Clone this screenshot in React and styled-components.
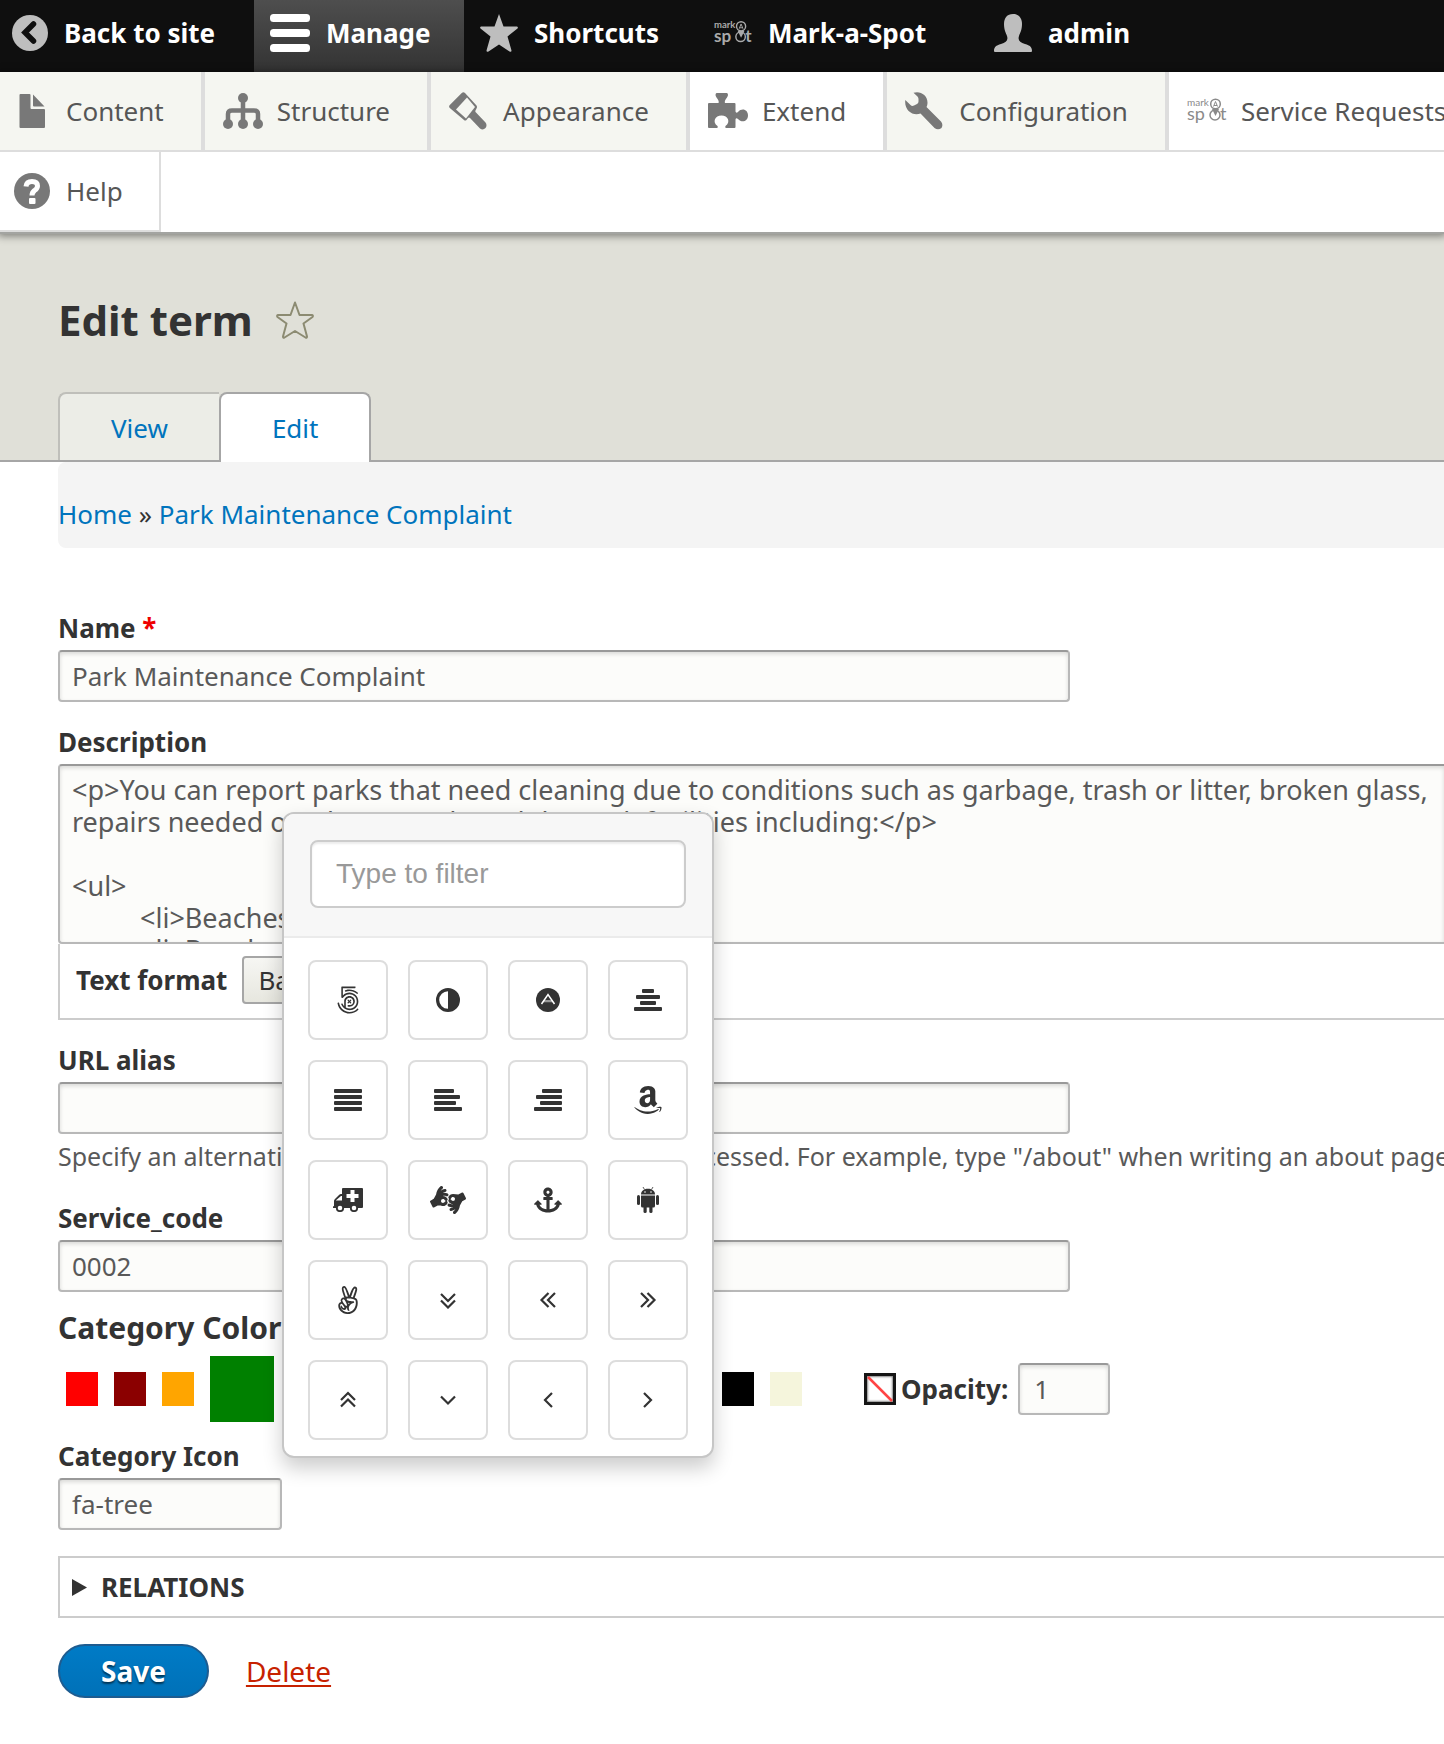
import React, { useState } from "react";
import styled, { createGlobalStyle, css } from "styled-components";
import {
  Fa500Px,
  FaAmazon,
  FaAmericanSignLanguageInterpreting,
  FaAnchor,
  FaAngellist,
} from "react-icons/fa";

const GlobalStyle = createGlobalStyle`
  *, *::before, *::after { box-sizing: border-box; }
  html { overflow-x: hidden; background: #fff; }
  body {
    margin: 0;
    overflow-x: hidden;
    min-height: 100vh;
    background: #fff;
    color: #333;
    font: 26px/32px "Noto Sans", "Open Sans", sans-serif;
  }
  button, input, textarea, select { font: inherit; color: inherit; margin: 0; }
  svg { display: block; flex: none; }
`;

/* ---------- Toolbar ---------- */

const Bar = styled.nav`
  display: flex;
  height: 72px;
  background: #0f0f0f;
  color: #fff;
  font-weight: 700;
`;

const BarItem = styled.a`
  display: flex;
  align-items: center;
  gap: 16px;
  min-width: ${(p) => p.$width}px;
  padding: 0 16px 6px ${(p) => p.$start || 16}px;
  color: #fff;
  white-space: nowrap;
  text-decoration: none;
  ${(p) => p.$active && css`background: linear-gradient(#4e4e4e, #333);`}
`;

const Tray = styled.nav`
  position: relative;
  z-index: 1;
  background: #fff;
  color: #565656;
  box-shadow: 0 2px 0 #a3a4a1, 0 2px 8px 2px rgba(0, 0, 0, 0.45);
`;

const TrayRow = styled.div`
  display: flex;
  height: 80px;
  overflow: hidden;
  border-bottom: ${(p) => (p.$ruled ? "2px solid #ddd" : "0")};
`;

const TrayItem = styled.a`
  display: flex;
  flex: none;
  align-items: center;
  gap: ${(p) => p.$gap || 14}px;
  padding: 0 ${(p) => (p.$thin ? 36 : 37)}px 0 ${(p) => p.$start || 18}px;
  border-right: ${(p) => (p.$thin ? 2 : 4)}px solid #ddd;
  border-bottom: ${(p) => (p.$thin ? "2px solid #ddd" : "0")};
  background: ${(p) => (p.$plain ? "#fff" : "#f5f6f1")};
  color: #565656;
  white-space: nowrap;
  text-decoration: none;
`;

/* ---------- Page header ---------- */

const PageHeader = styled.header`
  padding: 62px 0 0 58px;
  background: #e0e0d8;
  border-bottom: 2px solid #a6a6a6;
`;

const TitleRow = styled.div`
  display: flex;
  align-items: center;
  gap: 23px;
  margin-bottom: 46px;
`;

const Title = styled.h1`
  margin: 0;
  font-size: 42px;
  line-height: 52px;
`;

const StarButton = styled.button`
  padding: 0;
  border: 0;
  background: none;
`;

const Tabs = styled.nav`
  display: flex;
`;

const Tab = styled.a`
  padding: 0 51px;
  border: 2px solid ${(p) => (p.$active ? "#a6a6a6" : "#bfbfba")};
  border-bottom: 0;
  border-right-width: ${(p) => (p.$active ? 2 : 0)}px;
  border-radius: ${(p) => (p.$active ? "8px 8px 0 0" : "8px 0 0 0")};
  margin-bottom: ${(p) => (p.$active ? -2 : 0)}px;
  background: ${(p) => (p.$active ? "#fff" : "#ecede7")};
  color: #0074bd;
  line-height: 68px;
  text-decoration: none;
  height: ${(p) => (p.$active ? 70 : 68)}px;
`;

/* ---------- Form ---------- */

const Main = styled.main`
  padding: 0 0 46px 58px;
`;

const Breadcrumb = styled.nav`
  padding: 36px 0 18px;
  border-radius: 8px 0 0 8px;
  background: #f4f4f4;
  a { color: #0074bd; text-decoration: none; }
`;

const Form = styled.form`
  padding-top: 64px;
`;

const Field = styled.div`
  margin-bottom: ${(p) => p.$after || 24}px;
`;

const Label = styled.label`
  display: block;
  margin-bottom: 6px;
  font-weight: 700;
`;

const Required = styled.span`
  color: #e00;
`;

const box = css`
  border: 2px solid #b8b8b8;
  border-top-color: #999;
  border-radius: 4px;
  background: #fcfcfa;
  color: #595959;
  box-shadow: inset 0 2px 4px rgba(0, 0, 0, 0.14);
  outline: 0;
`;

const TextInput = styled.input`
  ${box}
  display: block;
  width: ${(p) => p.$width};
  max-width: 100%;
  height: 52px;
  padding: 0 ${(p) => p.$pad || 12}px;
`;

const TextArea = styled.textarea`
  ${box}
  display: block;
  width: 100%;
  height: 180px;
  padding: 8px 0 0 12px;
  border-right: 0;
  border-radius: 4px 0 0 4px;
  overflow: hidden;
  resize: none;
  font-size: 27px;
  tab-size: 68px;
  white-space: pre;
`;

const FormatRow = styled.div`
  display: flex;
  align-items: center;
  gap: 15px;
  padding: 12px 16px 14px;
  border: 2px solid #ccc;
  border-width: 0 0 2px 2px;
  label { margin: 0; }
`;

const Select = styled.select`
  height: 48px;
  padding: 0 60px 0 14px;
  appearance: none;
  border: 2px solid #a6a6a6;
  border-radius: 4px;
  background: linear-gradient(#f6f6f3, #e7e7df);
  color: #333;
`;

const Help = styled.p`
  margin: 6px 0 30px;
  overflow: hidden;
  color: #595959;
  font-size: 25px;
  white-space: nowrap;
`;

const SubHeading = styled.h4`
  margin: 0 0 10px;
  font-size: 30px;
  line-height: 36px;
`;

const ColorRow = styled.div`
  display: flex;
  align-items: center;
  height: 66px;
  padding-left: 8px;
`;

const Swatches = styled.div`
  display: flex;
  align-items: center;
  gap: 16px;
  margin-right: 62px;
`;

const Swatch = styled.button`
  width: ${(p) => (p.$selected ? 64 : 32)}px;
  height: ${(p) => (p.$selected ? 66 : 34)}px;
  padding: 0;
  border: 0;
  background: ${(p) => p.$color};
`;

const ClearSwatch = styled.button`
  width: 32px;
  height: 32px;
  padding: 0;
  border: 3px solid #151515;
  background: #fff;
  box-shadow: inset 0 0 2px 1px #888;
`;

const OpacityLabel = styled.label`
  margin: 0 10px 0 5px;
  font-weight: 700;
`;

const IconField = styled.div`
  position: relative;
  width: 224px;
`;

const Relations = styled.details`
  margin-bottom: 26px;
  border: 2px solid #ccc;
  border-right: 0;
`;

const Summary = styled.summary`
  display: flex;
  align-items: center;
  gap: 14px;
  padding: 13px 12px;
  font-weight: 700;
  text-transform: uppercase;
  list-style: none;
`;

const Actions = styled.div`
  display: flex;
  align-items: center;
  gap: 37px;
`;

const SaveButton = styled.button`
  height: 54px;
  padding: 0 41px;
  border: 2px solid #1e5c90;
  border-radius: 27px;
  background: linear-gradient(#007bc6, #0071b8);
  color: #fff;
  font-size: 28px;
  font-weight: 700;
  line-height: 48px;
  text-shadow: 0 2px 2px rgba(0, 0, 0, 0.55);
`;

const DeleteLink = styled.a`
  color: #c72100;
  font-size: 28px;
  text-decoration-thickness: 2px;
  text-underline-offset: 3px;
`;

/* ---------- Icon picker ---------- */

const Popover = styled.div`
  position: absolute;
  left: 100%;
  bottom: calc(100% + 20px);
  width: 432px;
  border: 2px solid #c6c6c6;
  border-radius: 12px;
  background: #fff;
  box-shadow: 0 10px 20px rgba(0, 0, 0, 0.2);
  overflow: hidden;
`;

const Filter = styled.div`
  padding: 26px 26px 28px;
  border-bottom: 2px solid #ebebeb;
  background: #f7f7f7;
`;

const FilterInput = styled.input`
  display: block;
  width: 100%;
  height: 68px;
  padding: 0 24px;
  border: 2px solid #ccc;
  border-radius: 8px;
  background: #fff;
  box-shadow: inset 0 2px 2px rgba(0, 0, 0, 0.08);
  font: 28px/40px "Liberation Sans", Arial, sans-serif;
  &::placeholder { color: #999; opacity: 1; }
`;

const IconGrid = styled.div`
  display: grid;
  grid-template-columns: repeat(4, 80px);
  gap: 20px;
  padding: 22px 24px 16px;
`;

const IconButton = styled.button`
  display: flex;
  align-items: center;
  justify-content: center;
  height: 80px;
  padding: 0;
  border: 2px solid #ddd;
  border-radius: 8px;
  background: #fff;
  color: #333;
`;

/* ---------- Drawings ---------- */

const BackIcon = () => (
  <svg width="36" height="36" viewBox="0 0 36 36">
    <circle cx="18" cy="18" r="18" fill="#bebebe" />
    <path d="M21.500 9L13 17.500L21.500 26" fill="none" stroke="#0f0f0f" strokeWidth="5.500" strokeLinecap="round" strokeLinejoin="miter" />
  </svg>
);

const MenuIcon = () => (
  <svg width="40" height="38" viewBox="0 0 40 38" fill="#fff">
    <rect width="40" height="8" rx="3.500" />
    <rect y="15" width="40" height="8" rx="3.500" />
    <rect y="30" width="40" height="8" rx="3.500" />
  </svg>
);

const StarIcon = () => (
  <svg width="38" height="38" viewBox="0 0 38 38" fill="#bebebe">
    <path d="M19 0L23.500 12.500H37Q38.500 13 37.500 14.500L27.500 22.500L31.500 36.500Q31.500 38.500 29.500 37.500L19 30.500L8.500 37.500Q6.500 38.500 6.500 36.500L10.500 22.500L.5 14.500Q-.5 13 1 12.500H14.500Z" />
  </svg>
);

const UserIcon = () => (
  <svg width="38" height="38" viewBox="0 0 38 38" fill="#bebebe">
    <path d="M19 0C13 0 10 4 10 10C10 16 12 19 13 22C14.500 26 12 28.500 7 30C2 31.500 0 33 0 37Q0 38 1 38H37Q38 38 38 37C38 33 36 31.500 31 30C26 28.500 23.500 26 25 22C26 19 28 16 28 10C28 4 25 0 19 0Z" />
  </svg>
);

const SpotLogo = ({ color, size = 40 }) => (
  <svg width={size} height="28" viewBox="0 0 40 28" fill={color} overflow="visible" aria-hidden="true">
    <text x="0" y="9" fontFamily="Lato, sans-serif" fontSize="10">mark</text>
    <text x="0" y="23" fontFamily="Lato, sans-serif" fontSize="18">sp</text>
    <text x="33" y="23" fontFamily="Lato, sans-serif" fontSize="18">t</text>
    <circle cx="28" cy="18" r="5" fill="none" stroke={color} strokeWidth="1.500" />
    <circle cx="28.500" cy="7" r="4.800" fill="none" stroke={color} strokeWidth="1.500" />
    <path d="M26.500 9.500L28.500 4.500L30.500 9.500M27 8.500H30" fill="none" stroke={color} />
    <path d="M25 12H32L28.500 19Z" />
  </svg>
);

const FileIcon = () => (
  <svg width="40" height="34" viewBox="0 0 40 34" fill="#787878">
    <path d="M8.500 0H17.500Q18.500 0 18.500 1V14Q18.500 15 19.500 15H32Q33 15 33 16V33Q33 34 32 34H8.500Q7.500 34 7.500 33V1Q7.500 0 8.500 0ZM21 .5L32.500 12.500H22Q21 12.500 21 11.500Z" />
  </svg>
);

const StructureIcon = () => (
  <svg width="40" height="36" viewBox="0 0 40 36" fill="#787878">
    <circle cx="20" cy="5" r="5" />
    <circle cx="5" cy="31" r="5" />
    <circle cx="20" cy="31" r="5" />
    <circle cx="35" cy="31" r="5" />
    <path d="M20 5V30M5 30V21Q5 17.500 9 17.500H31Q35 17.500 35 21V30" fill="none" stroke="#787878" strokeWidth="4.500" />
  </svg>
);

const BrushIcon = () => (
  <svg width="40" height="38" viewBox="0 0 40 38" fill="#787878">
    <path d="M13 .8Q14.500 -.6 16 1L27.500 13.500Q28.500 15 27.500 16.500L26.500 18.500Q26 19.500 27 20.500L36.500 30.500Q38.500 33 36.500 36Q34 38.500 31 36.500L21 26Q20 25 19 26L17.500 28Q16 29 15 28L.8 16Q-.6 14.500 .8 13Z" />
    <path d="M18 5.500L26 15L17 26.500L7 17.500Z" fill="#f5f6f1" />
  </svg>
);

const PuzzleIcon = () => (
  <svg width="40" height="36" viewBox="0 0 40 36" fill="#787878">
    <path d="M0 11Q0 10 1 10H10.500Q11.500 8 8.500 4.500Q6.500 1.500 8.500 0H19Q21 1.500 19 4.500Q16 8 17 10H26.500Q27.500 10 27.500 11V18.500Q28 20.500 30 19C34 14.500 40 16.500 40 22.500C40 28 34 30.500 30 26Q28 24.500 27.500 26.500V34Q27.500 35 26.500 35H18Q16.500 34.500 17.500 33C23 29 20 22.500 13.500 22.500C7 22.500 4 29 9.500 33Q10.500 34.500 9 35H1Q0 35 0 34Z" />
  </svg>
);

const WrenchIcon = () => (
  <svg width="40" height="38" viewBox="0 0 40 38" fill="#787878">
    <path d="M8.500 .8C15 -1.500 22.500 3 22.500 10.500C22.500 12.500 22 14 21.500 15L36 29.500Q38.500 32.500 36.500 36Q33 38.500 29.500 36L15.500 21.500C8 24.500 -1 18.500 .3 8L5.500 13Q7 14.500 9 13.500L12 12Q13.500 11 13.500 9.500L13.500 7Q13.500 5.500 12.500 4.500Z" />
  </svg>
);

const HelpIcon = () => (
  <svg width="36" height="36" viewBox="0 0 36 36">
    <circle cx="18" cy="18" r="18" fill="#787878" />
    <path d="M12 13.500Q12.500 8.500 18 8.500Q23.500 8.500 23.500 13Q23.500 15.500 20.500 17.500Q18 19.500 18 22.500" fill="none" stroke="#fff" strokeWidth="5" />
    <rect x="15" y="25" width="6.500" height="6" rx="1" fill="#fff" />
  </svg>
);

const OutlineStar = () => (
  <svg width="38" height="38" viewBox="0 0 38 38" fill="none" stroke="#8c8b72" strokeWidth="2" strokeLinejoin="round">
    <path d="M19 1.500L23.500 14H36Q37.500 14.500 36.500 16L27.500 22.500L31 35.500Q31 37.500 29.500 36.500L19 30L8.500 36.500Q7 37.500 7 35.500L10.500 22.500L1.500 16Q.5 14.500 2 14H14.500Z" />
  </svg>
);

const AdjustIcon = () => (
  <svg width="24" height="24" viewBox="0 0 24 24">
    <circle cx="12" cy="12" r="10.400" fill="none" stroke="currentColor" strokeWidth="3.200" />
    <path d="M12 2A10 10 0 0 1 12 22Z" fill="currentColor" />
  </svg>
);

const AdnIcon = () => (
  <svg width="24" height="24" viewBox="0 0 24 24">
    <circle cx="12" cy="12" r="12" fill="currentColor" />
    <path d="M8 12H16L17.500 14.300H6.500Z" fill="#999" />
    <path d="M5.500 16L12 6.500L18.500 16" fill="none" stroke="#fff" strokeWidth="1.500" />
  </svg>
);

const ALIGN = { center: [12, 24, 16, 28], justify: [28, 28, 28, 28], left: [20, 26, 22, 28], right: [20, 26, 22, 28] };

const AlignIcon = ({ mode }) => (
  <svg width="28" height="22" viewBox="0 0 28 22" fill="currentColor">
    {ALIGN[mode].map((w, i) => (
      <rect key={i} x={mode === "center" ? (28 - w) / 2 : mode === "right" ? 28 - w : 0} y={i * 6} width={w} height="4" rx="1" />
    ))}
  </svg>
);

const AmbulanceIcon = () => (
  <svg width="30" height="24" viewBox="0 0 30 24" fill="currentColor">
    <path fillRule="evenodd" d="M10 0H29Q30 0 30 1V19Q30 20 29 20H0V18.500L1 18V13Q1 12 2 11L6 7Q7 6 8 6H9V1Q9 0 10 0ZM3 12.500H9V8H8L3 12.200ZM17.500 2V6H13.500V10H17.500V14H21.500V10H25.500V6H21.500V2Z" />
    <circle cx="7" cy="20" r="3.200" fill="#fff" stroke="currentColor" strokeWidth="1.800" />
    <circle cx="21" cy="20" r="3.200" fill="#fff" stroke="currentColor" strokeWidth="1.800" />
  </svg>
);

const AndroidIcon = () => (
  <svg width="22" height="26" viewBox="0 0 22 26" fill="currentColor">
    <path d="M4 7.500C4 4.500 6.500 1.800 11 1.800S18 4.500 18 7.500Z" />
    <path d="M6 0L7.500 2.500M16 0L14.500 2.500" stroke="currentColor" strokeWidth=".8" />
    <circle cx="8" cy="5" r=".8" fill="#fff" />
    <circle cx="14" cy="5" r=".8" fill="#fff" />
    <path d="M4 8.500H18V19Q18 20.500 16.500 20.500H5.500Q4 20.500 4 19Z" />
    <rect x="0" y="8" width="3" height="10" rx="1.500" />
    <rect x="19" y="8" width="3" height="10" rx="1.500" />
    <rect x="6.500" y="18" width="3.200" height="8" rx="1.500" />
    <rect x="12.300" y="18" width="3.200" height="8" rx="1.500" />
  </svg>
);

const ANGLES = {
  "double-down": "M2 3L9 10L16 3M2 9.500L9 16.500L16 9.500",
  "double-left": "M9.500 2L2.500 9L9.500 16M16 2L9 9L16 16",
  "double-right": "M2 2L9 9L2 16M8.500 2L15.500 9L8.500 16",
  "double-up": "M2 9L9 2L16 9M2 15.500L9 8.500L16 15.500",
  down: "M2 5.500L9 12.500L16 5.500",
  left: "M13 2L6 9L13 16",
  right: "M5 2L12 9L5 16",
};

const AngleIcon = ({ mode }) => (
  <svg width="18" height="18" viewBox="0 0 18 18" fill="none" stroke="currentColor" strokeWidth="2.200">
    <path d={ANGLES[mode]} />
  </svg>
);

/* ---------- Data ---------- */

const ICONS = [
  ["500px", <Fa500Px size={28} />],
  ["adjust", <AdjustIcon />],
  ["adn", <AdnIcon />],
  ["align-center", <AlignIcon mode="center" />],
  ["align-justify", <AlignIcon mode="justify" />],
  ["align-left", <AlignIcon mode="left" />],
  ["align-right", <AlignIcon mode="right" />],
  ["amazon", <FaAmazon size={32} />],
  ["ambulance", <AmbulanceIcon />],
  ["sign-language", <FaAmericanSignLanguageInterpreting size={36} />],
  ["anchor", <FaAnchor size={28} />],
  ["android", <AndroidIcon />],
  ["angellist", <FaAngellist size={28} />],
  ["angle-double-down", <AngleIcon mode="double-down" />],
  ["angle-double-left", <AngleIcon mode="double-left" />],
  ["angle-double-right", <AngleIcon mode="double-right" />],
  ["angle-double-up", <AngleIcon mode="double-up" />],
  ["angle-down", <AngleIcon mode="down" />],
  ["angle-left", <AngleIcon mode="left" />],
  ["angle-right", <AngleIcon mode="right" />],
];

const COLORS = [
  "red", "darkred", "orange", "green", "darkgreen", "blue", "darkblue", "cadetblue",
  "purple", "indigo", "pink", "gray", "lightgray", "black", "beige",
];

const DESCRIPTION = [
  "<p>You can report parks that need cleaning due to conditions such as garbage, trash or litter, broken glass,",
  "repairs needed on playgrounds and the park facilities including:</p>",
  "",
  "<ul>",
  "\t<li>Beaches</li>",
  "\t<li>Benches</li>",
  "</ul>",
].join("\n");

export default function App() {
  const [color, setColor] = useState("green");
  const [icon, setIcon] = useState("fa-tree");

  return (
    <>
      <GlobalStyle />
      <Bar aria-label="Toolbar">
        <BarItem href="#site" $start={12} $width={254}><BackIcon />Back to site</BarItem>
        <BarItem href="#manage" $width={210} $active><MenuIcon />Manage</BarItem>
        <BarItem href="#shortcuts" $width={234}><StarIcon />Shortcuts</BarItem>
        <BarItem href="#spot" $width={280}><SpotLogo color="#aaa" size={38} />Mark-a-Spot</BarItem>
        <BarItem href="#user"><UserIcon />admin</BarItem>
      </Bar>
      <Tray aria-label="Administration">
        <TrayRow $ruled>
          <TrayItem href="#content" $start={12}><FileIcon />Content</TrayItem>
          <TrayItem href="#structure"><StructureIcon />Structure</TrayItem>
          <TrayItem href="#appearance"><BrushIcon />Appearance</TrayItem>
          <TrayItem href="#extend" $plain><PuzzleIcon />Extend</TrayItem>
          <TrayItem href="#config"><WrenchIcon />Configuration</TrayItem>
          <TrayItem href="#requests" $plain><SpotLogo color="#8a8a8a" />Service Requests</TrayItem>
        </TrayRow>
        <TrayRow>
          <TrayItem href="#help" $plain $thin $start={14} $gap={16}><HelpIcon />Help</TrayItem>
        </TrayRow>
      </Tray>

      <PageHeader>
        <TitleRow>
          <Title>Edit term</Title>
          <StarButton type="button" aria-label="Add to shortcuts"><OutlineStar /></StarButton>
        </TitleRow>
        <Tabs aria-label="Tabs">
          <Tab href="#view">View</Tab>
          <Tab href="#edit" $active>Edit</Tab>
        </Tabs>
      </PageHeader>

      <Main>
        <Breadcrumb aria-label="Breadcrumb">
          <a href="#home">Home</a> » <a href="#term">Park Maintenance Complaint</a>
        </Breadcrumb>

        <Form onSubmit={(e) => e.preventDefault()}>
          <Field>
            <Label htmlFor="name">Name <Required>*</Required></Label>
            <TextInput id="name" $width="1012px" defaultValue="Park Maintenance Complaint" />
          </Field>

          <Field>
            <Label htmlFor="description">Description</Label>
            <TextArea id="description" wrap="off" defaultValue={DESCRIPTION} />
            <FormatRow>
              <Label htmlFor="format">Text format</Label>
              <Select id="format"><option>Basic HTML</option></Select>
            </FormatRow>
          </Field>

          <Field $after={30}>
            <Label htmlFor="alias">URL alias</Label>
            <TextInput id="alias" $width="1012px" />
            <Help>
              Specify an alternative path by which this data can be accessed. For example, type "/about" when writing an about page.
            </Help>
          </Field>

          <Field $after={18}>
            <Label htmlFor="code">Service_code</Label>
            <TextInput id="code" $width="1012px" defaultValue="0002" />
          </Field>

          <Field $after={18}>
            <SubHeading>Category Color</SubHeading>
            <ColorRow>
              <Swatches>
                {COLORS.map((c) => (
                  <Swatch key={c} type="button" aria-label={c} $color={c} $selected={c === color} onClick={() => setColor(c)} />
                ))}
              </Swatches>
              <ClearSwatch type="button" aria-label="No color">
                <svg width="26" height="26" viewBox="0 0 26 26"><path d="M1 1L25 25" stroke="#f44" strokeWidth="2.500" /></svg>
              </ClearSwatch>
              <OpacityLabel htmlFor="opacity">Opacity:</OpacityLabel>
              <TextInput id="opacity" $width="92px" $pad={14} defaultValue="1" />
            </ColorRow>
          </Field>

          <Field $after={26}>
            <Label htmlFor="icon">Category Icon</Label>
            <IconField>
              <TextInput id="icon" $width="224px" value={icon} onChange={(e) => setIcon(e.target.value)} />
              <Popover role="dialog" aria-label="Icons">
                <Filter>
                  <FilterInput type="search" placeholder="Type to filter" aria-label="Type to filter" />
                </Filter>
                <IconGrid>
                  {ICONS.map(([name, drawing]) => (
                    <IconButton key={name} type="button" aria-label={name} onClick={() => setIcon(`fa-${name}`)}>
                      {drawing}
                    </IconButton>
                  ))}
                </IconGrid>
              </Popover>
            </IconField>
          </Field>

          <Relations>
            <Summary>
              <svg width="15" height="17" viewBox="0 0 15 17" fill="#333"><path d="M0 0L15 8.500L0 17Z" /></svg>
              Relations
            </Summary>
          </Relations>

          <Actions>
            <SaveButton type="submit">Save</SaveButton>
            <DeleteLink href="#delete">Delete</DeleteLink>
          </Actions>
        </Form>
      </Main>
    </>
  );
}
